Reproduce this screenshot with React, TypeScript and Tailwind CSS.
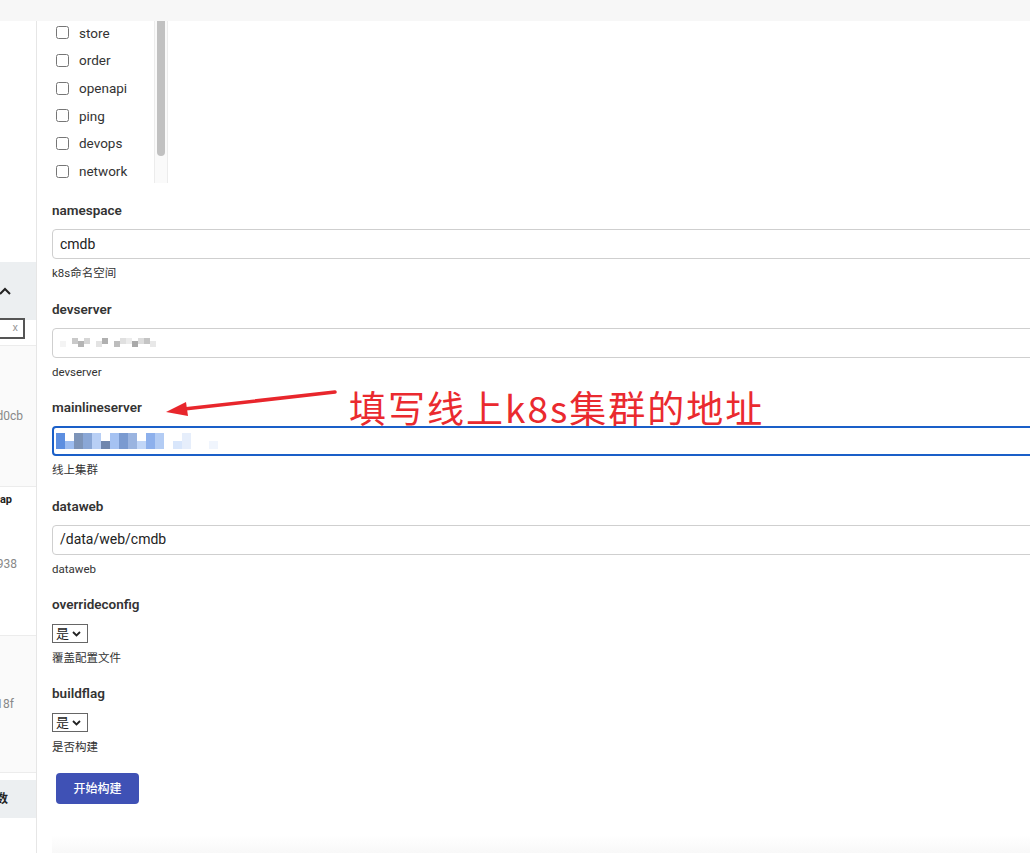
import React from "react";

const services = ["store", "order", "openapi", "ping", "devops", "network"];

const grayBlocks = [
    "#f4f4f4", "#ffffff", "#c9c9c9", "#b5b5b5", "#d6d6d6", "#ffffff", "#e3e3e3", "#b0b0b0",
    "#ffffff", "#bdbdbd", "#e0e0e0", "#ececec", "#a9a9a9", "#dcdcdc", "#c4c4c4", "#e8e8e8",
];

const blueBlocks = [
    "#5d8fe0", "#9dbdf0", "#7d94b8", "#8aa7d6", "#b8cff5", "#6f86ad", "#a5c2f2", "#7a9ad0",
    "#9ab4e0", "#c1d6f7", "#8db0ec", "#b3ccf4", "#ffffff", "#d8e6fb", "#e6eefb", "#ffffff",
    "#ffffff", "#f0f5fd", "#ffffff",
];

const Field = ({
    label,
    help,
    children,
}: {
    label: string;
    help: string;
    children: React.ReactNode;
}) => (
    <div className="mb-[18.5px]">
        <div className="h-[18px] leading-[18px] text-[13.5px] font-semibold text-[#333]">{label}</div>
        <div className="mt-[10px]">{children}</div>
        <div className="mt-[7px] h-[15px] leading-[15px] text-[11.5px] text-[#333]">{help}</div>
    </div>
);

const TextBox = ({ children, focused }: { children: React.ReactNode; focused?: boolean }) => (
    <div
        className={
            focused
                ? "w-[1010px] h-[30px] rounded-[4px] border-2 border-[#1a5fc8] flex items-center pl-[2px]"
                : "w-[1010px] h-[30px] rounded-[4px] border border-[#cfcfcf] flex items-center pl-[7px] text-[14px] text-[#222]"
        }
    >
        {children}
    </div>
);

const FakeSelect = () => (
    <div className="w-[36px] h-[19px] border border-[#666] flex items-center pl-[3px] gap-[3px] text-[13px] text-[#222] bg-white">
        <span className="leading-none">是</span>
        <svg width="9" height="6" viewBox="0 0 9 6">
            <path d="M1 1l3.5 3.5L8 1" fill="none" stroke="#222" strokeWidth="1.8" />
        </svg>
    </div>
);

const Sidebar = () => (
    <div className="w-[37px] shrink-0 border-r border-[#e6e6e6] flex flex-col overflow-hidden text-[12px]">
        <div className="h-[241px]" />
        <div className="h-[58px] bg-[#eceff1] flex items-center">
            <svg width="12" height="8" viewBox="0 0 12 8" className="-ml-[1px]">
                <path d="M1 7l5-5 5 5" fill="none" stroke="#222" strokeWidth="2" />
            </svg>
        </div>
        <div className="h-[25px]">
            <div className="w-[27px] h-[21px] -ml-[2px] mt-[-2px] border-2 border-[#555] flex items-center justify-end pr-[5px] text-[11px] text-[#999]">
                x
            </div>
        </div>
        <div className="h-[141px] border-t border-[#ececec] bg-[#fafafa] flex items-center justify-end pr-[13px] text-[#888]">
            d0cb
        </div>
        <div className="h-[149px] border-t border-[#ececec] flex flex-col items-end pr-[24px]">
            <span className="mt-[5px] text-[11px] font-bold text-[#222]">ap</span>
            <span className="mt-[46px] text-[#888] -mr-[5px]">938</span>
        </div>
        <div className="h-[137px] border-t border-[#ececec] bg-[#fafafa] flex items-center justify-end pr-[22px] text-[#888]">
            18f
        </div>
        <div className="h-[8px] border-t border-[#ececec]" />
        <div className="h-[38px] bg-[#eceff1] flex items-center justify-end pr-[28px] font-bold text-[#222]">
            数
        </div>
    </div>
);

export default function App() {
    return (
        <div
            className="relative w-[1030px] h-[853px] overflow-hidden bg-white flex flex-col"
            style={{ fontFamily: 'Roboto, "Noto Sans CJK SC", sans-serif' }}
        >
            <div className="h-[21px] shrink-0 bg-[#f7f7f7]" />
            <div className="flex flex-1 min-h-0">
                <Sidebar />
                <div className="flex-1 flex flex-col pl-[15px] overflow-hidden">
                    <div className="w-[116px] h-[162px] flex overflow-hidden">
                        <div className="flex-1 -mt-[2px]">
                            {services.map((s) => (
                                <div key={s} className="h-[27.7px] flex items-center pl-[4px]">
                                    <input type="checkbox" className="m-0 w-[13px] h-[13px]" readOnly />
                                    <span className="ml-[10px] text-[13.5px] text-[#333]">{s}</span>
                                </div>
                            ))}
                        </div>
                        <div className="w-[14px] bg-[#fafafa] border-x border-[#ececec] flex justify-center">
                            <div className="w-[8px] h-[135px] bg-[#c1c1c1] rounded-b-[4px]" />
                        </div>
                    </div>

                    <div className="mt-[18px]">
                        <Field label="namespace" help="k8s命名空间">
                            <TextBox>cmdb</TextBox>
                        </Field>
                        <Field label="devserver" help="devserver">
                            <TextBox>
                                <div className="flex">
                                    {grayBlocks.map((c, i) => (
                                        <span key={i} className="w-[6px] h-[6px]" style={{ background: c, marginTop: i % 3 === 0 ? 3 : 0 }} />
                                    ))}
                                </div>
                            </TextBox>
                        </Field>
                        <Field label="mainlineserver" help="线上集群">
                            <TextBox focused>
                                <div className="flex flex-col">
                                    <div className="flex">
                                        {blueBlocks.map((c, i) => (
                                            <span key={i} className="w-[9px] h-[8px]" style={{ background: i % 4 === 1 ? "#ffffff" : c }} />
                                        ))}
                                    </div>
                                    <div className="flex">
                                        {blueBlocks.map((c, i) => (
                                            <span key={i} className="w-[9px] h-[8px]" style={{ background: c }} />
                                        ))}
                                    </div>
                                </div>
                            </TextBox>
                        </Field>
                        <Field label="dataweb" help="dataweb">
                            <TextBox>/data/web/cmdb</TextBox>
                        </Field>
                    </div>

                    <div className="mb-[18px]">
                        <div className="h-[18px] leading-[18px] text-[13.5px] font-semibold text-[#333]">overrideconfig</div>
                        <div className="mt-[11px]">
                            <FakeSelect />
                        </div>
                        <div className="mt-[8px] h-[15px] leading-[15px] text-[11.5px] text-[#333]">覆盖配置文件</div>
                    </div>
                    <div>
                        <div className="h-[18px] leading-[18px] text-[13.5px] font-semibold text-[#333]">buildflag</div>
                        <div className="mt-[11px]">
                            <FakeSelect />
                        </div>
                        <div className="mt-[8px] h-[15px] leading-[15px] text-[11.5px] text-[#333]">是否构建</div>
                    </div>

                    <button className="mt-[18px] ml-[4px] w-[83px] h-[31px] rounded-[4px] bg-[#3f51b5] text-white text-[12px] font-medium">
                        开始构建
                    </button>

                    <div className="flex-1" />
                    <div className="h-[18px] bg-gradient-to-b from-white to-[#f8f8f8]" />
                </div>
            </div>

            {/* annotation */}
            <svg className="absolute left-0 top-0 pointer-events-none" width="1030" height="853">
                <path d="M335 392 L184 409" stroke="#e8262c" strokeWidth="3.5" strokeLinecap="round" />
                <polygon points="166,412 186,402 188,416" fill="#e8262c" />
            </svg>
            <div
                className="absolute left-[349px] top-[385px] text-[37px] leading-[44px] tracking-[2px] text-[#ea2a2f] whitespace-nowrap"
                style={{ fontFamily: '"Noto Sans CJK SC", sans-serif' }}
            >
                填写线上k8s集群的地址
            </div>
        </div>
    );
}
